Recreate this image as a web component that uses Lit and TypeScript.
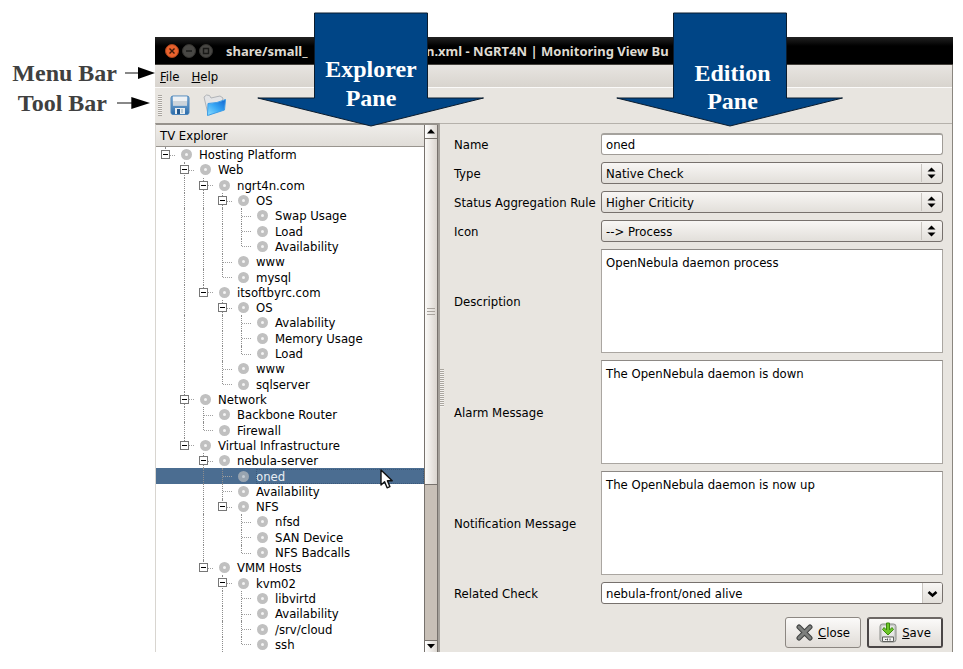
import { LitElement, html, css, svg, nothing } from "lit";
import { customElement, property } from "lit/decorators.js";

interface TreeNode {
  name: string;
  children?: TreeNode[];
  /** further siblings follow below the visible part of the list */
  continues?: boolean;
}

const leaf = (name: string): TreeNode => ({ name });

const HIERARCHY: TreeNode = {
  name: "Hosting Platform",
  children: [
    {
      name: "Web",
      children: [
        {
          name: "ngrt4n.com",
          children: [
            { name: "OS", children: [leaf("Swap Usage"), leaf("Load"), leaf("Availability")] },
            leaf("www"),
            leaf("mysql"),
          ],
        },
        {
          name: "itsoftbyrc.com",
          children: [
            { name: "OS", children: [leaf("Avalability"), leaf("Memory Usage"), leaf("Load")] },
            leaf("www"),
            leaf("sqlserver"),
          ],
        },
      ],
    },
    { name: "Network", children: [leaf("Backbone Router"), leaf("Firewall")] },
    {
      name: "Virtual Infrastructure",
      children: [
        {
          name: "nebula-server",
          children: [
            leaf("oned"),
            leaf("Availability"),
            { name: "NFS", children: [leaf("nfsd"), leaf("SAN Device"), leaf("NFS Badcalls")] },
          ],
        },
        {
          name: "VMM Hosts",
          children: [
            {
              name: "kvm02",
              continues: true,
              children: [leaf("libvirtd"), leaf("Availability"), leaf("/srv/cloud"), leaf("ssh")],
            },
          ],
        },
      ],
    },
  ],
};

interface Row {
  name: string;
  guides: boolean[];
  more: boolean;
  parent: boolean;
}

function flatten(node: TreeNode, guides: boolean[], more: boolean): Row[] {
  const kids = node.children ?? [];
  return [
    { name: node.name, guides, more, parent: kids.length > 0 },
    ...kids.flatMap((kid, i) =>
      flatten(kid, [...guides, more], i < kids.length - 1 || !!kid.continues)
    ),
  ];
}

@customElement("tree-explorer")
export class TreeExplorer extends LitElement {
  @property() selected = "oned";

  static styles = css`
    :host { display: flex; background: #fff; border-left: 1px solid #d8d5d0; border-top: 2px solid #96928c; border-right: 2px solid #a5a19b; min-width: 0; }
    .main { flex: 1; display: flex; flex-direction: column; min-width: 0; }
    .head { height: 22px; line-height: 22px; padding-left: 4px; background: linear-gradient(#efedea, #e0ddd8); border-bottom: 1px solid #98948e; box-sizing: border-box; }
    .rows { flex: 1; display: grid; grid-auto-rows: minmax(15px, 1fr); margin: 0; padding: 0; list-style: none; }
    .row { display: flex; align-items: stretch; position: relative; white-space: nowrap; }
    .on { background: #4b6d91; color: #e8eef4; }
    .cell { width: 19px; flex: none; display: grid; grid-template-columns: 10px 9px; grid-template-rows: 1fr 1fr; }
    .v { border-right: 1px dotted #8c8c8c; }
    .h { border-top: 1px dotted #a0a0a0; grid-column: 2; grid-row: 2; }
    .tall { grid-row: 1 / 3; }
    .cell.branch { position: relative; }
    .box { position: absolute; left: 5px; top: 3px; width: 9px; height: 9px; padding: 0; border: 1px solid #777; background: #fff; box-sizing: border-box; display: grid; place-items: center; }
    .box::after { content: ""; width: 5px; height: 1px; background: #000; }
    .disc { align-self: center; width: 11px; height: 11px; margin: 0 7px 0 6px; border: 4px solid #c0c0c0; border-radius: 50%; box-sizing: border-box; background: #f4f4f4; }
    .on .disc { border-color: #98a4b0; background: #c4ccd4; }
    .text { align-self: center; line-height: 15px; }
    .on .text { flex: 1; outline: 1px dotted #3a587a; outline-offset: -1px; }
    .pointer { position: absolute; left: 224px; top: 1px; width: 13px; height: 20px; z-index: 1; }
    .scroll { width: 14px; box-sizing: border-box; border-left: 1px solid #77726d; border-right: 1px solid #77726d; background: #c8c0b7; display: flex; flex-direction: column; }
    .step { height: 14px; padding: 0; border: 0; border-bottom: 1px solid #77726d; background: linear-gradient(90deg, #fff, #ddd8d2); display: grid; place-items: center; }
    .step.down { height: 12px; border-bottom: 0; border-top: 1px solid #77726d; }
    .thumb { flex: 69; border-bottom: 1px solid #77726d; background: linear-gradient(90deg, #fbfaf8, #dad5cf); display: grid; place-items: center; }
    .gap { flex: 31; }
  `;

  private row(r: Row) {
    const on = r.name === this.selected;
    return html`<li class="row ${on ? "on" : ""}" role="treeitem" aria-selected=${on}>
      ${r.guides.map((g) => html`<span class="cell">${g ? html`<i class="v tall"></i>` : nothing}</span>`)}
      <span class="cell branch">
        <i class="v ${r.more ? "tall" : ""}"></i><i class="h"></i>
        ${r.parent ? html`<button class="box" aria-label="Collapse ${r.name}"></button>` : nothing}
      </span>
      <span class="disc"></span>
      <span class="text">${r.name}</span>
      ${on
        ? html`<svg class="pointer" viewBox="0 0 13 20"><path d="M1 1v15l3.600-3.200 2.500 6 2.800-1.200-2.500-5.800h4.800z" fill="#fff" stroke="#111" stroke-width="1.400" stroke-linejoin="round"/></svg>`
        : nothing}
    </li>`;
  }

  render() {
    return html`
      <div class="main">
        <div class="head">TV Explorer</div>
        <ul class="rows" role="tree">${flatten(HIERARCHY, [], false).map((r) => this.row(r))}</ul>
      </div>
      <div class="scroll">
        <button class="step" aria-label="Scroll up"><svg width="8" height="5"><path d="M4 0l4 4.500H0z"/></svg></button>
        <div class="thumb"><svg width="8" height="8"><path d="M0 .5h8M0 3.500h8M0 6.500h8" stroke="#a9a49e"/></svg></div>
        <div class="gap"></div>
        <button class="step down" aria-label="Scroll down"><svg width="8" height="5"><path d="M0 0h8L4 4.500z"/></svg></button>
      </div>`;
  }
}

@customElement("edition-form")
export class EditionForm extends LitElement {
  static styles = css`
    :host { display: flex; flex-direction: column; min-width: 0; box-sizing: border-box; padding: 9px 9px 4px 10px; border-top: 1px solid #b5b1ab; }
    .fields { flex: 1; display: grid; grid-template-columns: 140px minmax(0, 1fr); grid-template-rows: repeat(4, 22px) repeat(3, minmax(60px, 1fr)) 22px; gap: 7px; align-items: center; }
    input, select, textarea, .act { font: inherit; color: #000; box-sizing: border-box; margin: 0; outline: none; }
    label { white-space: nowrap; }
    input, .pick { width: 100%; height: 22px; }
    input { padding: 0 4px; border: 1px solid #a09c97; border-top: 2px solid #a5a29d; border-radius: 3px; background: #fff; }
    .pick { position: relative; display: flex; }
    select { appearance: none; width: 100%; padding: 0 26px 0 4px; border: 1px solid #77716d; border-radius: 3px; background: linear-gradient(#f8f6f4, #e2dfda); }
    .mark { position: absolute; right: 1px; top: 2px; width: 20px; height: 18px; border-left: 1px solid #c9c5c0; pointer-events: none; }
    .drop { top: 1px; height: 20px; width: 19px; background: linear-gradient(#f8f6f4, #e2dfda); border-radius: 0 2px 2px 0; }
    .combo select { background: #fff; }
    textarea { width: 100%; height: 100%; resize: none; padding: 5px 4px; border: 1px solid #aaa6a1; border-top-color: #8d8985; background: #fff; line-height: 15px; }
    .actions { display: flex; justify-content: flex-end; gap: 6px; margin-top: 13px; }
    .act { height: 31px; width: 76px; padding: 0; border: 1px solid #8c8782; border-radius: 3px; background: linear-gradient(#fbfaf9, #e0dcd7); display: flex; align-items: center; justify-content: center; gap: 5px; }
    .act.main { border: 2px solid #55504e; border-color: #6c6764 #4a4646 #4a4646; }
  `;

  private select(id: string, value: string) {
    return html`<div class="pick">
      <select id=${id}><option>${value}</option></select>
      <svg class="mark" viewBox="0 0 20 18"><path d="M9.500 3.500l4 4h-8zM5.500 10.500h8l-4 4z"/></svg>
    </div>`;
  }

  render() {
    return html`
      <div class="fields">
        <label for="name">Name</label><input id="name" .value=${"oned"} />
        <label for="type">Type</label>${this.select("type", "Native Check")}
        <label for="rule">Status Aggregation Rule</label>${this.select("rule", "Higher Criticity")}
        <label for="icon">Icon</label>${this.select("icon", "--> Process")}
        <label for="desc">Description</label><textarea id="desc" .value=${"OpenNebula daemon process"}></textarea>
        <label for="alarm">Alarm Message</label><textarea id="alarm" .value=${"The OpenNebula daemon is down"}></textarea>
        <label for="notif">Notification Message</label><textarea id="notif" .value=${"The OpenNebula daemon is now up"}></textarea>
        <label for="check">Related Check</label>
        <div class="pick combo">
          <select id="check"><option>nebula-front/oned alive</option></select>
          <svg class="mark drop" viewBox="0 0 19 20"><path d="M5.500 9l4 3.500 4-3.500" fill="none" stroke="#000" stroke-width="2.600"/></svg>
        </div>
      </div>
      <div class="actions">
        <button class="act">
          <svg width="17" height="17" viewBox="0 0 17 17"><path d="M3 3l11 11M14 3L3 14" stroke="#3f4140" stroke-width="5" stroke-linecap="round"/><path d="M3 3l11 11M14 3L3 14" stroke="#7d7f7d" stroke-width="3" stroke-linecap="round"/></svg>
          <span><u>C</u>lose</span>
        </button>
        <button class="act main">
          <svg width="18" height="22" viewBox="0 0 18 22"><rect x="1" y="2" width="16" height="18" rx="2.500" fill="#c9cbc8" stroke="#8b8d89"/><rect x="3" y="4" width="12" height="10" rx="1" fill="#e6e7e5"/><path d="M3.500 15h11v4.500h-11z" fill="#f4f4f3" stroke="#60625f"/><path d="M6 17.500h1.500M8.500 16.500v2M11 16.500v2" stroke="#555"/><path d="M7.500 1h3v7l2.500-2.500 1.500 2L9 13 3.500 7.500l1.500-2L7.500 8z" fill="#6cc52a" stroke="#3c8a0c" stroke-linejoin="round"/></svg>
          <span><u>S</u>ave</span>
        </button>
      </div>`;
  }
}

@customElement("app-root")
export class AppRoot extends LitElement {
  static styles = css`
    :host { display: block; background: #fff; font: 13px/15px "DejaVu Sans Condensed", "DejaVu Sans", sans-serif; color: #000; }
    .page { position: relative; display: grid; grid-template-columns: 155px minmax(0, 1fr); min-height: 100vh; box-sizing: border-box; padding: 37px 10px 17px 0; }
    .notes { padding-top: 21px; font: bold 24px/30px "Liberation Serif", serif; color: #404040; }
    .note { display: flex; align-items: center; justify-content: flex-end; gap: 8px; white-space: nowrap; }
    .note svg { width: 30px; height: 12px; flex: none; }
    .note.tool { padding-right: 5px; gap: 10px; }
    .note.tool svg { width: 33px; }
    .window { display: flex; flex-direction: column; background: #e8e5e0; min-width: 0; }
    .title { height: 28px; box-sizing: border-box; background: linear-gradient(#222, #000 9px); border-bottom: 1px solid #44413c; display: flex; align-items: center; padding-left: 10px; color: #dfdbd2; font: bold 13px/20px "Noto Sans", "Open Sans", sans-serif; white-space: nowrap; overflow: hidden; }
    .ctl { width: 14px; height: 14px; margin-right: 3px; flex: none; padding: 0; border: 0; background: none; display: flex; }
    .name { padding-left: 10px; flex: none; width: 200px; }
    .body { flex: 1; display: flex; flex-direction: column; border-right: 1px solid #8a867f; }
    .menu { height: 22px; display: flex; gap: 12px; align-items: center; padding: 0 5px; background: linear-gradient(#e8e5e1, #d8d4ce); border-bottom: 1px solid #fbfaf9; }
    .menu a { color: #000; text-decoration: none; }
    .tools { height: 35px; box-sizing: border-box; display: flex; align-items: center; padding-left: 3px; }
    .tool { border: 0; background: none; padding: 0; display: flex; }
    .grip { width: 4px; height: 21px; background: repeating-linear-gradient(#aaa69f 0 1px, #f4f2f0 1px 2px); margin-right: 8px; }
    .save { margin-right: 13px; }
    .split { flex: 1; display: grid; grid-template-columns: 285px 4px minmax(0, 1fr); }
    .handle { border-top: 1px solid #b5b1ab; display: flex; align-items: center; }
    .handle i { flex: 1; height: 38px; background: repeating-linear-gradient(#aaa69f 0 1px, #f4f2f0 1px 2px); }
    .callout { position: absolute; top: 12px; width: 228px; height: 116px; color: #fff; font: bold 24px/29px "Liberation Serif", serif; text-align: center; }
    .callout svg { position: absolute; inset: 0; }
    .callout div { position: relative; padding-top: 43px; }
    .explorer { left: 257px; }
    .edition { left: 616px; }
    .edition div { padding: 47px 0 0 5px; line-height: 28px; }
  `;

  private control(kind: "close" | "min" | "max") {
    const close = kind === "close";
    const glyph = {
      close: "M4.500 4.500l5 5M9.500 4.500l-5 5",
      min: "M4 7h6",
      max: "M4.500 4.500h5v5h-5z",
    }[kind];
    return html`<button class="ctl" aria-label=${kind}>
      <svg width="14" height="14">
        <circle cx="7" cy="7" r="6.500" fill=${close ? "#e9622d" : "#484744"} stroke=${close ? "#a8441c" : "#343330"} />
        ${svg`<path d=${glyph} fill="none" stroke=${close ? "#3a1a0c" : "#191917"} stroke-width="1.400"/>`}
      </svg>
    </button>`;
  }

  private pointer() {
    return html`<svg viewBox="0 0 30 12" preserveAspectRatio="none"><path d="M0 6h15" stroke="#555" stroke-width="1.400"/><path d="M13 0l17 6-17 6z"/></svg>`;
  }

  private callout(kind: string, title: string) {
    return html`<div class="callout ${kind}">
      <svg width="228" height="116"><path d="M57.500 1h113v85h56L114 114 .8 86h56.700z" fill="#004586" stroke="#0b1c2e"/></svg>
      <div>${title}<br />Pane</div>
    </div>`;
  }

  render() {
    return html`<div class="page">
      <div class="notes">
        <div class="note">Menu Bar ${this.pointer()}</div>
        <div class="note tool">Tool Bar ${this.pointer()}</div>
      </div>
      <div class="window">
        <div class="title">
          ${this.control("close")}${this.control("min")}${this.control("max")}
          <span class="name">share/small_</span>
          <span>n.xml - NGRT4N | Monitoring View Bu</span>
        </div>
        <div class="body">
          <div class="menu"><a href="#file"><u>F</u>ile</a><a href="#help"><u>H</u>elp</a></div>
          <div class="tools">
            <div class="grip"></div>
            <button class="tool save" aria-label="Save">
              <svg width="20" height="21" viewBox="0 0 20 21"><defs><linearGradient id="b" x2="0" y2="1"><stop stop-color="#8db6da"/><stop offset="1" stop-color="#2a6cab"/></linearGradient></defs><rect x="1" y="1" width="18" height="18.500" rx="2" fill="url(#b)" stroke="#4d85ba"/><path d="M3 1.500h14v9H3z" fill="#eef1f4"/><path d="M3 6h14v4.500H3z" fill="#cdd4da"/><path d="M5 13h10v6H5z" fill="#e9edf0"/><path d="M7 14h3v5H7z" fill="#22588f"/><path d="M12 14v4" stroke="#88aabb"/></svg>
            </button>
            <button class="tool" aria-label="Open">
              <svg width="24" height="23" viewBox="0 0 24 23"><defs><linearGradient id="f" x1="0" y1="1" x2="1" y2="0"><stop stop-color="#8fe0ff"/><stop offset=".5" stop-color="#35a6f5"/><stop offset="1" stop-color="#1263cf"/></linearGradient></defs><path d="M1 3l2.500-2 3 .5 1.500 2.500 9-2 3 2-1 4-12 13-2-1z" fill="#e3e4e6" stroke="#b1b4b8"/><path d="M5 9.500Q14 9.500 22.500 5.500L21.500 16 4.500 21.500z" fill="url(#f)" stroke="#3c9ce6"/></svg>
            </button>
          </div>
          <div class="split">
            <tree-explorer></tree-explorer>
            <div class="handle"><i></i></div>
            <edition-form></edition-form>
          </div>
        </div>
      </div>
      ${this.callout("explorer", "Explorer")}${this.callout("edition", "Edition")}
    </div>`;
  }
}
